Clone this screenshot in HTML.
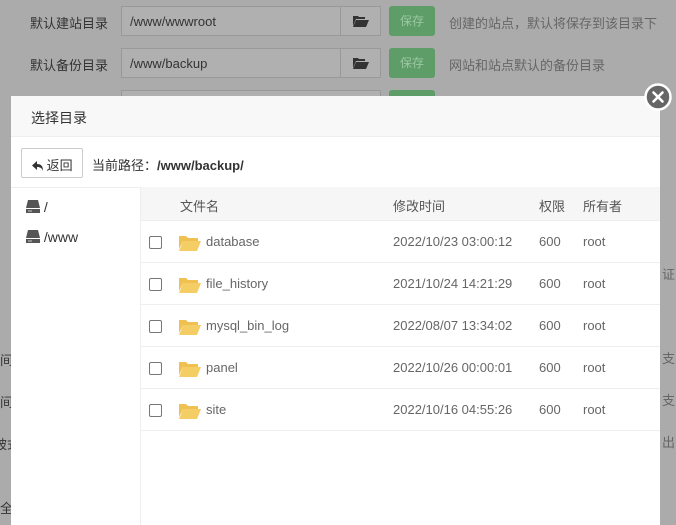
<!DOCTYPE html>
<html><head><meta charset="utf-8"><style>
*{box-sizing:border-box;margin:0;padding:0}
body{width:676px;height:525px;overflow:hidden;background:#ababab;font-family:"Liberation Sans","Noto Sans CJK SC",sans-serif;font-size:13px;color:#555;position:relative}
.a{position:absolute}
.lbl{left:30px;color:#333;font-size:13px}
.inp{left:121px;width:260px;height:30px;border:1px solid #999;background:#b0b0b0;color:#333;padding:7px 8px;font-size:13px}
.inp .fb{position:absolute;right:0;top:0;width:40px;height:28px;border-left:1px solid #999}
.sv{left:389px;width:46px;height:30px;background:#5e9d68;border-radius:3px;color:#9cc7a2;text-align:center;line-height:30px;font-size:12px}
.hint{left:449px;color:#666;font-size:13px}
.modal{left:11px;top:96px;width:649px;height:429px;background:#fff}
.row{position:absolute;left:130px;width:519px;height:42px;border-bottom:1px solid #eee;color:#666}
.row span{position:absolute;top:13px}
.cb{position:absolute;left:8px;top:15px;width:13px;height:13px;border:1px solid #777;border-radius:2px}
</style></head><body>
<div class="a lbl" style="top:13px">默认建站目录</div>
<div class="a inp" style="top:6px">/www/wwwroot<div class="fb"><svg class="a" style="left:12px;top:8px" width="16" height="12" viewBox="0 0 16 12"><path d="M0 1h5l1 1h6v2H3L0 11z" fill="#333"/><path d="M3 5h13l-3 7H0z" fill="#333"/></svg></div></div>
<div class="a sv" style="top:6px">保存</div>
<div class="a hint" style="top:13px">创建的站点，默认将保存到该目录下</div>
<div class="a lbl" style="top:55px">默认备份目录</div>
<div class="a inp" style="top:48px">/www/backup<div class="fb"><svg class="a" style="left:12px;top:8px" width="16" height="12" viewBox="0 0 16 12"><path d="M0 1h5l1 1h6v2H3L0 11z" fill="#333"/><path d="M3 5h13l-3 7H0z" fill="#333"/></svg></div></div>
<div class="a sv" style="top:48px">保存</div>
<div class="a hint" style="top:55px">网站和站点默认的备份目录</div>
<div class="a inp" style="top:90px"></div>
<div class="a sv" style="top:90px"></div>
<div class="a" style="left:0;top:350px;color:#333">间</div>
<div class="a" style="left:0;top:392px;color:#333">间</div>
<div class="a" style="left:-6px;top:434px;color:#333">被式</div>
<div class="a" style="left:0;top:498px;color:#333">全</div>
<div class="a" style="left:662px;top:264px;color:#666">证</div>
<div class="a" style="left:662px;top:348px;color:#666">支</div>
<div class="a" style="left:662px;top:390px;color:#666">支</div>
<div class="a" style="left:662px;top:432px;color:#666">出</div>
<div class="a modal">
 <div class="a" style="left:0;top:0;width:649px;height:41px;background:#f8f8f8;border-bottom:1px solid #eee;padding:12px 20px;color:#333;font-size:14px">选择目录</div>
 <div class="a" style="left:10px;top:52px;width:62px;height:30px;border:1px solid #ccc;border-radius:2px;color:#333;padding:6px 0 0 10px">
 <svg width="11" height="10" viewBox="0 0 11 10" style="vertical-align:-1px"><path d="M0 4.5L5 0v3c4 0 6 2 6 7-1-3-3-4-6-4v3z" fill="#333"/></svg> 返回</div>
 <div class="a" style="left:81px;top:59px;color:#333">当前路径：<b>/www/backup/</b></div>
 <div class="a" style="left:0;top:91px;width:649px;border-top:1px solid #eee"></div>
 <div class="a" style="left:129px;top:91px;height:338px;border-left:1px solid #eee"></div>
 <div class="a" style="left:15px;top:103px;color:#333;font-size:14px"><svg width="14" height="13" viewBox="0 0 14 13" style="vertical-align:-1px"><path d="M2 0h10l2 8H0z" fill="#555"/><rect y="9" width="14" height="4" fill="#555"/><rect x="2" y="10.5" width="4" height="1" fill="#ccc"/></svg> /</div>
 <div class="a" style="left:15px;top:133px;color:#333;font-size:14px"><svg width="14" height="13" viewBox="0 0 14 13" style="vertical-align:-1px"><path d="M2 0h10l2 8H0z" fill="#555"/><rect y="9" width="14" height="4" fill="#555"/><rect x="2" y="10.5" width="4" height="1" fill="#ccc"/></svg> /www</div>
 <div class="row" style="top:91px;height:34px;background:#f6f6f6;color:#555"><span style="left:39px;top:9px">文件名</span><span style="left:252px;top:9px">修改时间</span><span style="left:398px;top:9px">权限</span><span style="left:442px;top:9px">所有者</span></div>
 <div class="row" style="top:125px"><div class="cb"></div><svg class="a" style="left:38px;top:14px" width="22" height="16" viewBox="0 0 22 16"><path d="M0 1h7l2 2h10v3H4L0 14z" fill="#f0c150"/><path d="M4 6h18l-4 10H0z" fill="#f5cd65"/></svg><span style="left:65px">database</span><span style="left:252px">2022/10/23 03:00:12</span><span style="left:398px">600</span><span style="left:442px">root</span></div>
 <div class="row" style="top:167px"><div class="cb"></div><svg class="a" style="left:38px;top:14px" width="22" height="16" viewBox="0 0 22 16"><path d="M0 1h7l2 2h10v3H4L0 14z" fill="#f0c150"/><path d="M4 6h18l-4 10H0z" fill="#f5cd65"/></svg><span style="left:65px">file_history</span><span style="left:252px">2021/10/24 14:21:29</span><span style="left:398px">600</span><span style="left:442px">root</span></div>
 <div class="row" style="top:209px"><div class="cb"></div><svg class="a" style="left:38px;top:14px" width="22" height="16" viewBox="0 0 22 16"><path d="M0 1h7l2 2h10v3H4L0 14z" fill="#f0c150"/><path d="M4 6h18l-4 10H0z" fill="#f5cd65"/></svg><span style="left:65px">mysql_bin_log</span><span style="left:252px">2022/08/07 13:34:02</span><span style="left:398px">600</span><span style="left:442px">root</span></div>
 <div class="row" style="top:251px"><div class="cb"></div><svg class="a" style="left:38px;top:14px" width="22" height="16" viewBox="0 0 22 16"><path d="M0 1h7l2 2h10v3H4L0 14z" fill="#f0c150"/><path d="M4 6h18l-4 10H0z" fill="#f5cd65"/></svg><span style="left:65px">panel</span><span style="left:252px">2022/10/26 00:00:01</span><span style="left:398px">600</span><span style="left:442px">root</span></div>
 <div class="row" style="top:293px"><div class="cb"></div><svg class="a" style="left:38px;top:14px" width="22" height="16" viewBox="0 0 22 16"><path d="M0 1h7l2 2h10v3H4L0 14z" fill="#f0c150"/><path d="M4 6h18l-4 10H0z" fill="#f5cd65"/></svg><span style="left:65px">site</span><span style="left:252px">2022/10/16 04:55:26</span><span style="left:398px">600</span><span style="left:442px">root</span></div>
</div>
<svg class="a" style="left:644px;top:83px" width="28" height="28" viewBox="0 0 28 28"><circle cx="14" cy="14" r="12.5" fill="#666" stroke="#fff" stroke-width="2.5"/><path d="M9.5 9.5l9 9M18.5 9.5l-9 9" stroke="#fff" stroke-width="2.6" stroke-linecap="round"/></svg>
</body></html>
